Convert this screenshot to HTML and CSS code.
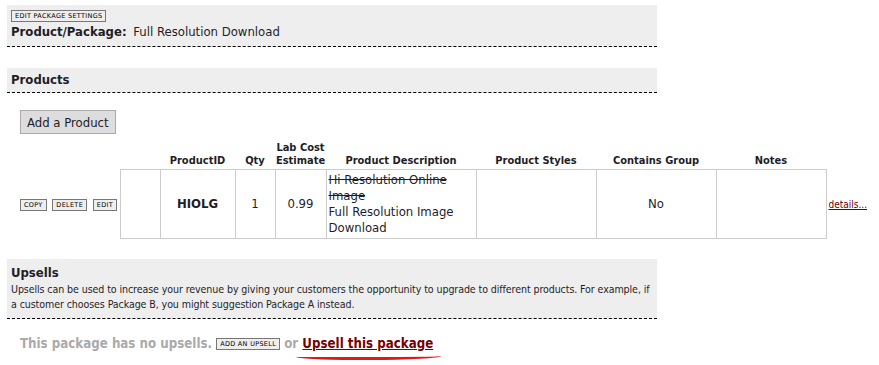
FILE: index.html
```html
<!DOCTYPE html>
<html lang="en">
<head>
    <meta charset="UTF-8">
    <title>Package Settings</title>
    <link rel="stylesheet" href="styles.css">
</head>
<body>
    <div class="section">
        <button class="tiny-btn">EDIT PACKAGE SETTINGS</button>
        <div class="package-title"><b>Product/Package:</b> Full Resolution Download</div>
    </div>

    <div class="section products-head">
        <h3>Products</h3>
    </div>

    <div class="products">
        <button class="big-btn">Add a Product</button>

        <table class="product-table">
            <thead>
                <tr>
                    <th class="col-actions"></th>
                    <th class="col-blank"></th>
                    <th class="col-id">ProductID</th>
                    <th class="col-qty">Qty</th>
                    <th class="col-cost">Lab Cost Estimate</th>
                    <th class="col-desc">Product Description</th>
                    <th class="col-styles">Product Styles</th>
                    <th class="col-group">Contains Group</th>
                    <th class="col-notes">Notes</th>
                    <th class="col-details"></th>
                </tr>
            </thead>
            <tbody>
                <tr>
                    <td class="actions">
                        <button class="tiny-btn">COPY</button>
                        <button class="tiny-btn">DELETE</button>
                        <button class="tiny-btn">EDIT</button>
                    </td>
                    <td class="cell"></td>
                    <td class="cell center strong">HIOLG</td>
                    <td class="cell center">1</td>
                    <td class="cell center">0.99</td>
                    <td class="cell desc"><s>Hi Resolution Online Image</s><br>Full Resolution Image Download</td>
                    <td class="cell"></td>
                    <td class="cell center">No</td>
                    <td class="cell"></td>
                    <td class="details"><a href="#">details...</a></td>
                </tr>
            </tbody>
        </table>
    </div>

    <div class="section upsells-head">
        <h3>Upsells</h3>
        <p>Upsells can be used to increase your revenue by giving your customers the opportunity to upgrade to different products. For example, if a customer chooses Package B, you might suggestion Package A instead.</p>
    </div>

    <div class="upsell-line">
        This package has no upsells.
        <button class="tiny-btn">ADD AN UPSELL</button>
        or
        <span class="marked"><a href="#">Upsell this package</a><span class="scribble"></span></span>
    </div>
</body>
</html>
```

FILE: styles.css
```css
body {
    margin: 0;
    padding: 5px 0 0 7px;
    font-family: "DejaVu Sans Condensed", "DejaVu Sans", sans-serif;
    font-size: 13px;
    color: #1e1e28;
    background: #fff;
}

.section {
    width: 650px;
    background-color: #eeeeee;
    border-bottom: 1px dashed #000;
    box-sizing: border-box;
    padding: 4px 4px 6px 4px;
}

.section h3 {
    margin: 0;
    font-size: 13px;
    font-weight: bold;
}

.tiny-btn {
    font-family: "DejaVu Sans", sans-serif;
    font-size: 6.5px;
    letter-spacing: 0.3px;
    padding: 1px 3px 1px 3px;
    line-height: 8px;
    height: 12px;
    background: #eee;
    border: 1px solid #777;
    border-radius: 0;
    color: #000;
    margin: 0;
    vertical-align: middle;
}

.section > .tiny-btn {
    display: block;
    margin-top: 1px;
}

.package-title {
    margin-top: 1px;
    font-size: 13px;
    line-height: 17px;
}

.package-title b {
    margin-right: 3px;
}

.products-head {
    margin-top: 21px;
    padding: 4px 4px 5px 4px;
}

.products {
    padding: 17px 0 0 13px;
}

.big-btn {
    font-family: "DejaVu Sans Condensed", "DejaVu Sans", sans-serif;
    font-size: 13px;
    padding: 3px 6px;
    background-color: #dddddd;
    border: 1px solid #aaa;
    border-radius: 0;
    color: #1e1e28;
    height: 24px;
}

.product-table {
    border-collapse: collapse;
    margin-top: 7px;
}

.product-table th {
    font-size: 11px;
    font-weight: bold;
    line-height: 13px;
    vertical-align: bottom;
    padding: 0 0 2px 0;
    text-align: center;
}

.col-actions { width: 100px; }
.col-blank { width: 40px; }
.col-id { width: 75px; }
.col-qty { width: 40px; }
.col-cost { width: 51px; }
.col-desc { width: 150px; }
.col-styles { width: 120px; }
.col-group { width: 120px; }
.col-notes { width: 110px; }

.actions {
    padding: 0;
    white-space: nowrap;
}

.actions .tiny-btn {
    margin-right: 2px;
}

.cell {
    border: 1px solid #ccc;
    height: 68px;
    padding: 0 2px;
    line-height: 16px;
}

.center {
    text-align: center;
}

.strong {
    font-weight: bold;
}

.desc s {
    color: #1e1e28;
}

.details {
    padding-left: 2px;
    font-size: 10px;
}

.details a {
    color: #600;
}

.upsells-head {
    margin-top: 20px;
    padding: 6px 4px 6px 4px;
}

.upsells-head p {
    margin: 2px 0 0 0;
    font-size: 10.6px;
    line-height: 15px;
    letter-spacing: -0.1px;
}

.upsell-line {
    padding: 17px 0 0 13px;
    font-family: "DejaVu Sans Condensed", "DejaVu Sans", sans-serif;
    font-size: 13.2px;
    font-weight: bold;
    color: #aaa;
}

.marked {
    display: inline-block;
    vertical-align: top;
}

.marked a {
    color: #700;
}

.scribble {
    display: block;
    height: 5px;
    margin: 1px -8px 0 -6px;
    border-bottom: 3px solid #e01818;
    border-radius: 0 0 50% 40%;
}
```
